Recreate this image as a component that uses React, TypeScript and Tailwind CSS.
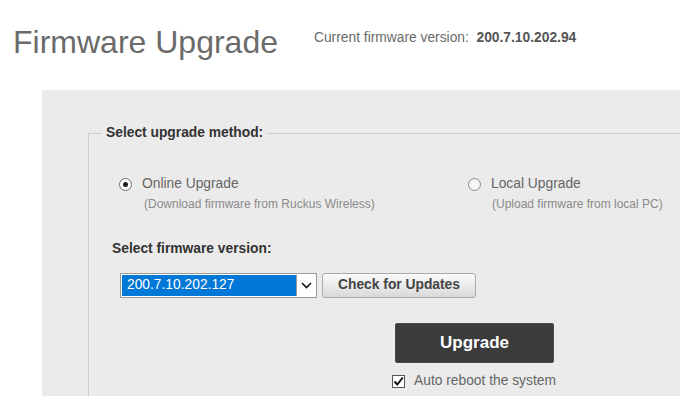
const font = "font-['Liberation_Sans',Arial,sans-serif]"

function Radio({ checked }: { checked: boolean }) {
  return (
    <span
      className={`flex w-[13px] h-[13px] shrink-0 items-center justify-center rounded-full border ${
        checked ? "border-[#6f6f6f] bg-white" : "border-[#8a8a8a] bg-[#f6f6f6]"
      }`}
    >
      {checked && <span className="w-[5px] h-[5px] rounded-full bg-[#1f1f1f]" />}
    </span>
  )
}

const options = [
  {
    label: "Online Upgrade",
    hint: "(Download firmware from Ruckus Wireless)",
    checked: true,
    width: "w-[349px]",
    hintPad: "pl-[25px]",
  },
  {
    label: "Local Upgrade",
    hint: "(Upload firmware from local PC)",
    checked: false,
    width: "w-[240px]",
    hintPad: "pl-[24px]",
  },
]

export default function App() {
  return (
    <div className={`w-[680px] h-[396px] overflow-hidden bg-white ${font}`}>
      {/* Header */}
      <div className="flex items-start pl-[13px] pt-[24px]">
        <h1 className="text-[32px] leading-[36px] text-[#6b6b6b] font-normal">Firmware Upgrade</h1>
        <p className="ml-[36px] mt-[6px] text-[13.8px] leading-[16px] text-[#6a6a6a] whitespace-nowrap">
          Current firmware version:&nbsp;&nbsp;<span className="font-bold text-[#555]">200.7.10.202.94</span>
        </p>
      </div>

      {/* Panel */}
      <div className="mt-[30px] ml-[42px] w-[700px] h-[400px] bg-[#ebebeb] pt-[34px] pl-[46px]">
        <fieldset className="w-[640px] h-[330px] border border-[#cdcdcd]">
          <legend className="ml-[13px] px-[4px] text-[13.8px] leading-[18px] font-bold text-[#333]">
            Select upgrade method:
          </legend>

          {/* Upgrade method */}
          <div className="flex pl-[30px] mt-[34px]">
            {options.map((o) => (
              <div key={o.label} className={o.width}>
                <label className="flex items-center gap-[10px]">
                  <Radio checked={o.checked} />
                  <span className="text-[13.8px] leading-[16px] text-[#666]">{o.label}</span>
                </label>
                <p className={`mt-[4px] ${o.hintPad} text-[12px] leading-[16px] text-[#8a8a8a] whitespace-nowrap`}>
                  {o.hint}
                </p>
              </div>
            ))}
          </div>

          {/* Firmware version */}
          <p className="mt-[29px] ml-[23px] text-[13.8px] leading-[16px] font-bold text-[#333]">
            Select firmware version:
          </p>
          <div className="flex items-center mt-[16px] ml-[31px] gap-[5px]">
            <div className="flex w-[197px] h-[25px] border border-[#9a9a9a] bg-white p-[1px]">
              <div className="flex flex-1 items-center bg-[#0078d7] pl-[5px] text-[13.8px] text-white">
                200.7.10.202.127
              </div>
              <div className="flex w-[19px] items-center justify-center border-l border-[#9a9a9a] bg-white">
                <svg width="11" height="7" viewBox="0 0 11 7" fill="none">
                  <path d="M1 1l4.5 4.5L10 1" stroke="#111" strokeWidth="1.6" />
                </svg>
              </div>
            </div>
            <button className="w-[154px] h-[25px] rounded-[3px] border border-[#a9a9a9] bg-gradient-to-b from-[#fbfbfb] to-[#d9d9d9] text-[13.8px] font-bold text-[#444]">
              Check for Updates
            </button>
          </div>

          {/* Upgrade */}
          <button className="mt-[25px] ml-[306px] w-[159px] h-[40px] rounded-[2px] border border-[#4a4a4a] bg-[#3b3b3b] text-[17px] font-bold text-white">
            Upgrade
          </button>
          <label className="flex items-center mt-[10px] ml-[303px] gap-[9px]">
            <span className="flex w-[13px] h-[13px] items-center justify-center border border-[#555] bg-white">
              <svg width="11" height="11" viewBox="0 0 11 11" fill="none">
                <path d="M1.5 5.5l2.8 3L9.8 1.5" stroke="#111" strokeWidth="2" />
              </svg>
            </span>
            <span className="text-[13.8px] leading-[16px] text-[#666]">Auto reboot the system</span>
          </label>
        </fieldset>
      </div>
    </div>
  )
}
